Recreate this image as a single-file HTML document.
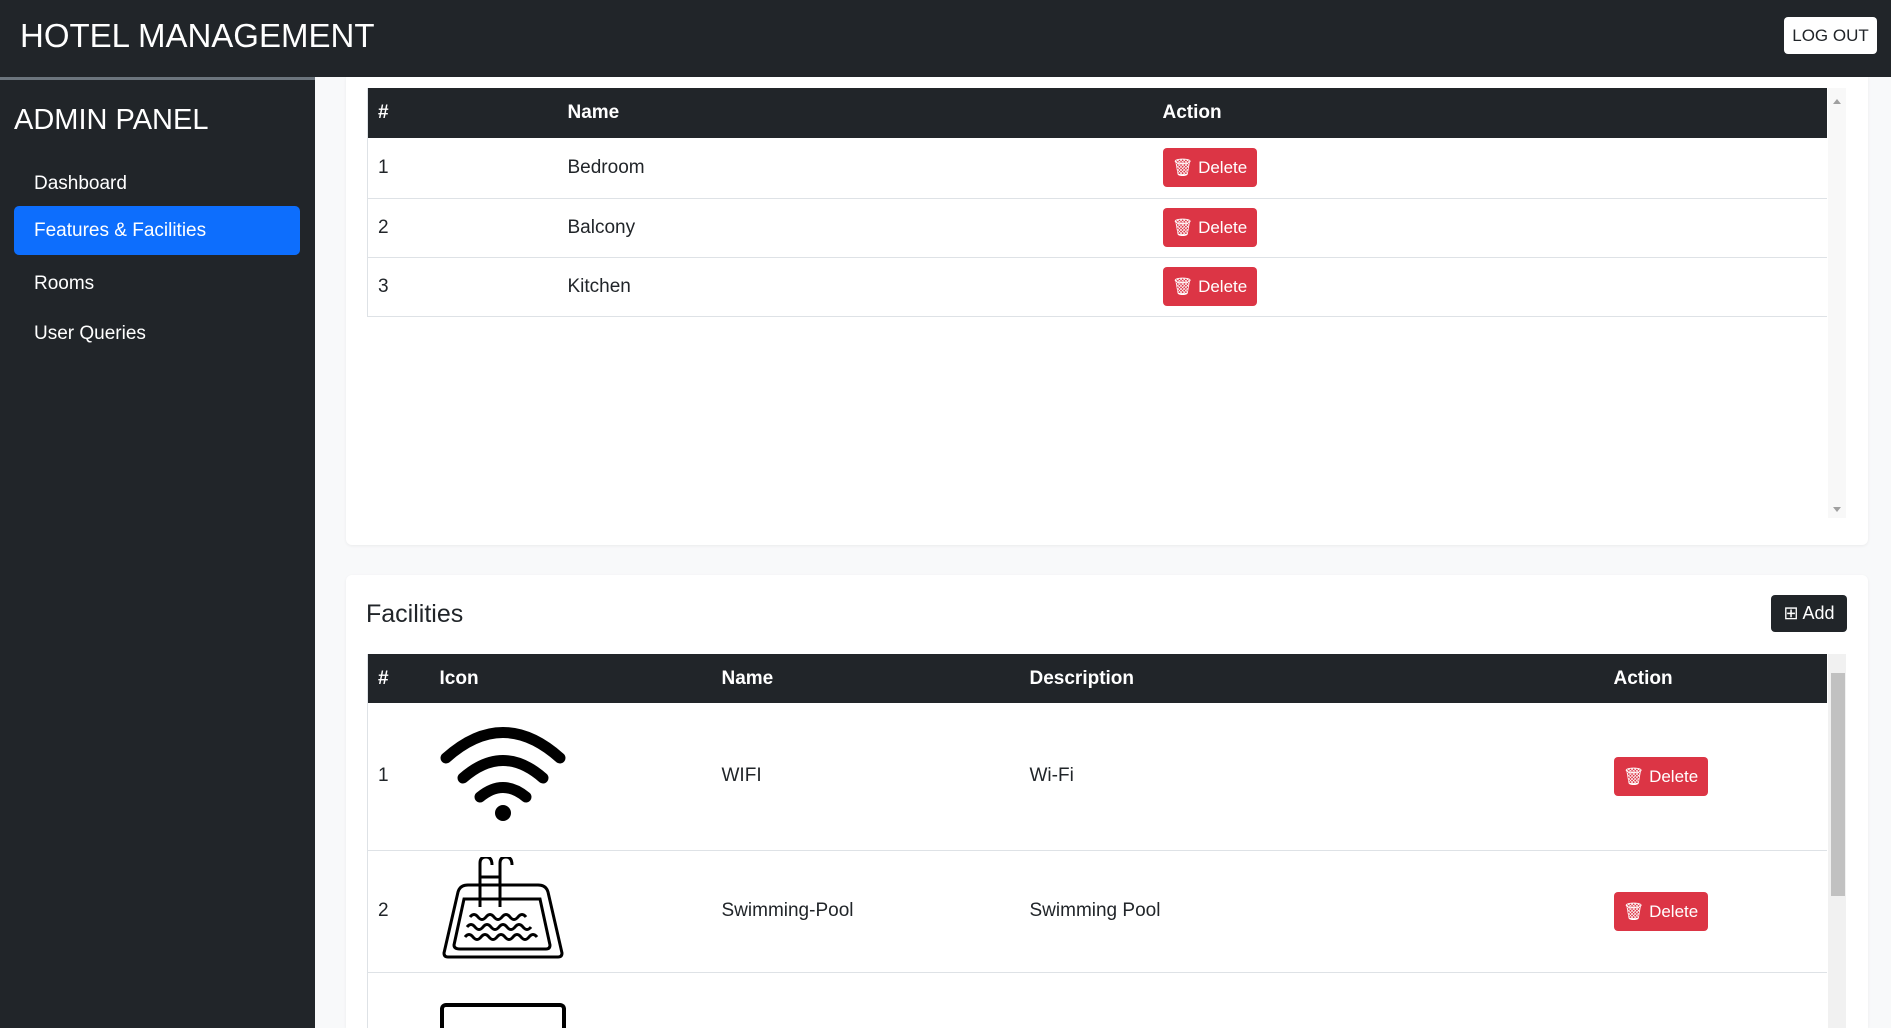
<!DOCTYPE html>
<html style="overflow:hidden;width:1891px;height:1028px"><head><style>
*{box-sizing:border-box;margin:0;padding:0}
body{width:1891px;height:1028px;overflow:hidden;background:#f8f9fa;font-family:"Liberation Sans",sans-serif;color:#212529;position:relative}
.top{position:absolute;left:0;top:0;width:1891px;height:77px;background:#212529}
.top h1{position:absolute;left:20px;top:17px;color:#fff;font-size:33px;font-weight:normal}
.logout{position:absolute;left:1784px;top:17px;width:93px;height:37px;background:#fff;border-radius:4px;font-size:17px;line-height:37px;text-align:center;color:#212529}
.side{position:absolute;left:0;top:77px;width:315px;height:951px;background:#212529;border-top:3px solid #6c757d}
.side h2{position:absolute;left:14px;top:24px;color:#fff;font-size:29px;font-weight:normal}
.nav{position:absolute;left:14px;width:286px;height:49px;line-height:49px;padding-left:20px;color:#fff;font-size:19px;border-radius:5px}
.card{position:absolute;left:346px;width:1522px;background:#fff;border-radius:6px;box-shadow:0 1px 3px rgba(0,0,0,.06);overflow:hidden}
table{border-collapse:collapse;position:absolute;left:21px;width:1460px;font-size:19px;table-layout:fixed}
th{background:#212529;color:#fff;text-align:left;font-weight:bold;padding-left:10px}
td{padding-left:10px;border-bottom:1px solid #dee2e6}
.del{display:inline-block;width:94px;height:39px;background:#dc3545;color:#fff;border-radius:4px;font-size:17px;line-height:39px;text-align:center}
.sb{position:absolute;width:18px;background:#f1f1f1}
</style></head><body>
<div class="top"><h1>HOTEL MANAGEMENT</h1><div class="logout">LOG OUT</div></div>
<div class="side"><h2>ADMIN PANEL</h2>
<div class="nav" style="top:79px">Dashboard</div>
<div class="nav" style="top:126px;background:#0d6efd">Features &amp; Facilities</div>
<div class="nav" style="top:179px">Rooms</div>
<div class="nav" style="top:229px">User Queries</div>
</div>
<div class="card" style="top:77px;height:468px;border-radius:0 0 6px 6px">
<table style="top:11px;border-left:1px solid #dee2e6">
<tr style="height:50px"><th style="width:190px">#</th><th style="width:595px">Name</th><th>Action</th></tr>
<tr style="height:60px"><td>1</td><td>Bedroom</td><td><span class="del">🗑 Delete</span></td></tr>
<tr style="height:59px"><td>2</td><td>Balcony</td><td><span class="del">🗑 Delete</span></td></tr>
<tr style="height:59px"><td>3</td><td>Kitchen</td><td><span class="del">🗑 Delete</span></td></tr>
</table>
<div class="sb" style="left:1482px;top:11px;height:430px;background:#f8f8f8"></div>
<div style="position:absolute;left:1487px;top:18px;width:0;height:0;border:4px solid transparent;border-bottom:5px solid #a0a0a0"></div>
<div style="position:absolute;left:1487px;top:430px;width:0;height:0;border:4px solid transparent;border-top:5px solid #a0a0a0"></div>
</div>
<div class="card" style="top:575px;height:453px;border-radius:6px 6px 0 0">
<div style="position:absolute;left:20px;top:25px;font-size:25px">Facilities</div>
<div style="position:absolute;left:1425px;top:20px;width:76px;height:37px;background:#212529;color:#fff;border-radius:4px;font-size:18px;line-height:37px;text-align:center">⊞ Add</div>
<table style="top:79px;border-left:1px solid #dee2e6">
<tr style="height:49px"><th style="width:62px">#</th><th style="width:282px">Icon</th><th style="width:308px">Name</th><th style="width:584px">Description</th><th>Action</th></tr>
<tr style="height:147px"><td>1</td><td>
<svg width="126" height="96" viewBox="0 0 126 96"><g fill="none" stroke="#000" stroke-width="11" stroke-linecap="round"><path d="M6 33 Q63 -18 120 33"/><path d="M23 53 Q63 18 103 53"/><path d="M40 72 Q63 53 86 72"/></g><ellipse cx="63" cy="88" rx="8" ry="8"/></svg></td><td>WIFI</td><td>Wi-Fi</td><td><span class="del">🗑 Delete</span></td></tr>
<tr style="height:122px"><td>2</td><td>
<svg width="126" height="102" viewBox="0 0 126 102"><g fill="none" stroke="#000" stroke-width="3"><path d="M4 96 L18 35 Q20 28 28 28 L98 28 Q106 28 108 35 L122 96 Q122 100 118 100 L8 100 Q4 100 4 96Z"/><path d="M14 88 L24 42 L100 42 L110 88 Q110 92 106 92 L20 92 Q14 92 14 88Z"/><path d="M40 50 V6 Q40 0 46 0 Q52 0 52 8 M60 50 V6 Q60 0 66 0 Q72 0 72 8 M40 20 H60"/><path d="M30 60 q4 -5 8 0 q4 5 8 0 q4 -5 8 0 q4 5 8 0 q4 -5 8 0 q4 5 8 0 q4 -5 8 0 M27 70 q4 -5 8 0 q4 5 8 0 q4 -5 8 0 q4 5 8 0 q4 -5 8 0 q4 5 8 0 q4 -5 8 0 q4 5 8 0 M25 80 q4 -5 8 0 q4 5 8 0 q4 -5 8 0 q4 5 8 0 q4 -5 8 0 q4 5 8 0 q4 -5 8 0 q4 5 8 0 q4 -5 8 0"/></g></svg></td><td>Swimming-Pool</td><td>Swimming Pool</td><td><span class="del">🗑 Delete</span></td></tr>
<tr style="height:100px"><td style="border:0"></td><td style="border:0;vertical-align:top;padding-top:30px"><div style="width:126px;height:40px;border:4px solid #000;border-bottom:0;border-radius:6px 6px 0 0"></div></td><td style="border:0"></td><td style="border:0"></td><td style="border:0"></td></tr>
</table>
<div class="sb" style="left:1482px;top:79px;height:400px"></div>
<div style="position:absolute;left:1485px;top:98px;width:14px;height:223px;background:#c1c1c1"></div>
</div>
</body></html>
